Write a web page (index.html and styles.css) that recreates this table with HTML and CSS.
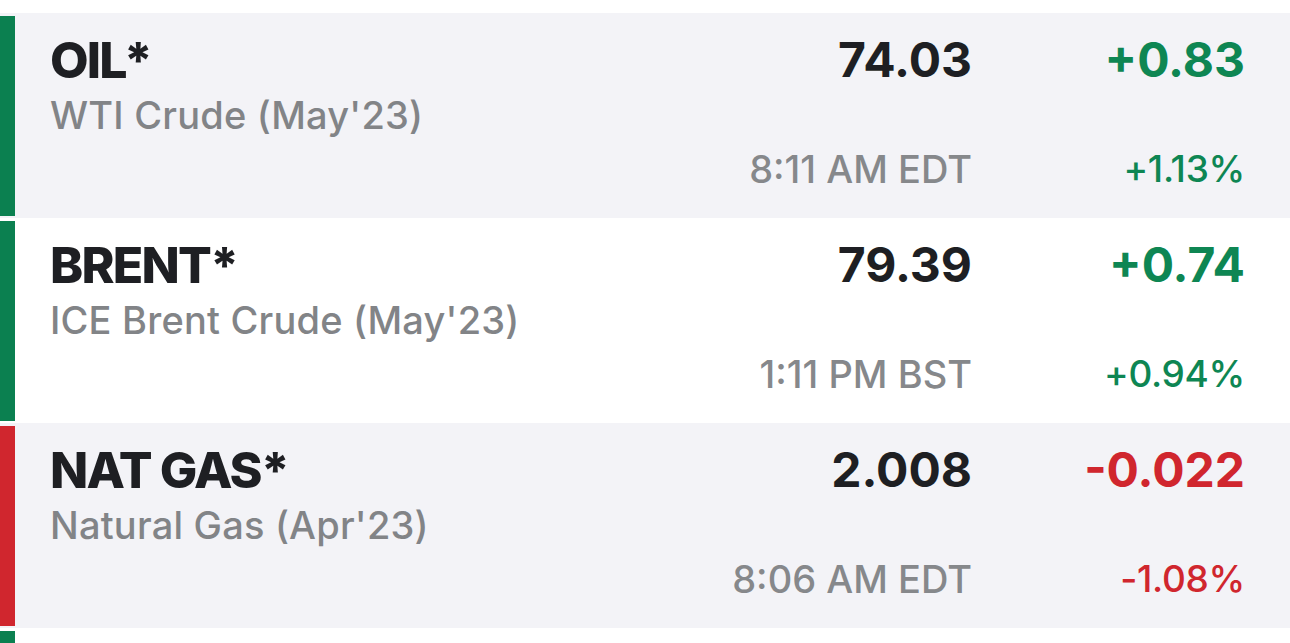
FILE: index.html
```html
<!DOCTYPE html>
<html>
<head>
<meta charset="utf-8">
<link rel="stylesheet" href="styles.css">
</head>
<body>
<div class="list">
  <div class="row shaded up">
    <div class="bar"></div>
    <div class="content">
      <div class="name">OIL*</div>
      <div class="price">74.03</div>
      <div class="chg">+0.83</div>
      <div class="desc">WTI Crude (May'23)</div>
      <div class="time">8:11 AM EDT</div>
      <div class="pct">+1.13%</div>
    </div>
  </div>
  <div class="row up">
    <div class="bar"></div>
    <div class="content">
      <div class="name">BRENT*</div>
      <div class="price">79.39</div>
      <div class="chg">+0.74</div>
      <div class="desc">ICE Brent Crude (May'23)</div>
      <div class="time">1:11 PM BST</div>
      <div class="pct">+0.94%</div>
    </div>
  </div>
  <div class="row shaded down">
    <div class="bar"></div>
    <div class="content">
      <div class="name">NAT GAS*</div>
      <div class="price">2.008</div>
      <div class="chg">-0.022</div>
      <div class="desc">Natural Gas (Apr'23)</div>
      <div class="time">8:06 AM EDT</div>
      <div class="pct">-1.08%</div>
    </div>
  </div>
  <div class="row stub up">
    <div class="bar"></div>
  </div>
</div>
</body>
</html>
```
FILE: styles.css
```css
html, body {
  margin: 0;
  padding: 0;
  background: #ffffff;
  overflow: hidden;
}
body {
  font-family: "Inter", "Liberation Sans", sans-serif;
  width: 1290px;
  height: 643px;
}
.list {
  padding-top: 13px;
}
.row {
  display: flex;
  height: 205px;
  background: #ffffff;
}
.row.shaded {
  background: #f3f3f7;
}
.row.stub {
  height: 15px;
}
.bar {
  width: 15px;
  margin: 3px 0 2px;
  flex: none;
}
.stub .bar {
  margin-bottom: 0;
}
.up .bar { background: #0b8050; }
.down .bar { background: #d0262e; }
.content {
  flex: 1;
  display: grid;
  grid-template-columns: 1fr auto 273px;
  grid-template-rows: 59px 54px 44px;
  padding: 21px 45px 0 35px;
  align-items: start;
}
.name {
  font-size: 50px;
  line-height: 52px;
  font-weight: 800;
  letter-spacing: -1.8px;
  color: #1e1f23;
}
.price {
  font-size: 48px;
  line-height: 52px;
  font-weight: 700;
  color: #1e1f23;
  text-align: right;
}
.chg {
  font-size: 48px;
  line-height: 52px;
  font-weight: 700;
  text-align: right;
}
.desc {
  grid-column: 1 / 4;
  font-size: 38px;
  line-height: 44px;
  font-weight: 500;
  letter-spacing: 0.2px;
  color: #828487;
}
.time {
  grid-column: 2;
  font-size: 38px;
  line-height: 44px;
  font-weight: 500;
  color: #86888b;
  text-align: right;
}
.pct {
  font-size: 37px;
  line-height: 44px;
  font-weight: 500;
  letter-spacing: -0.3px;
  text-align: right;
}
.up .chg, .up .pct { color: #0e8653; }
.down .chg, .down .pct { color: #d0262e; }
```
